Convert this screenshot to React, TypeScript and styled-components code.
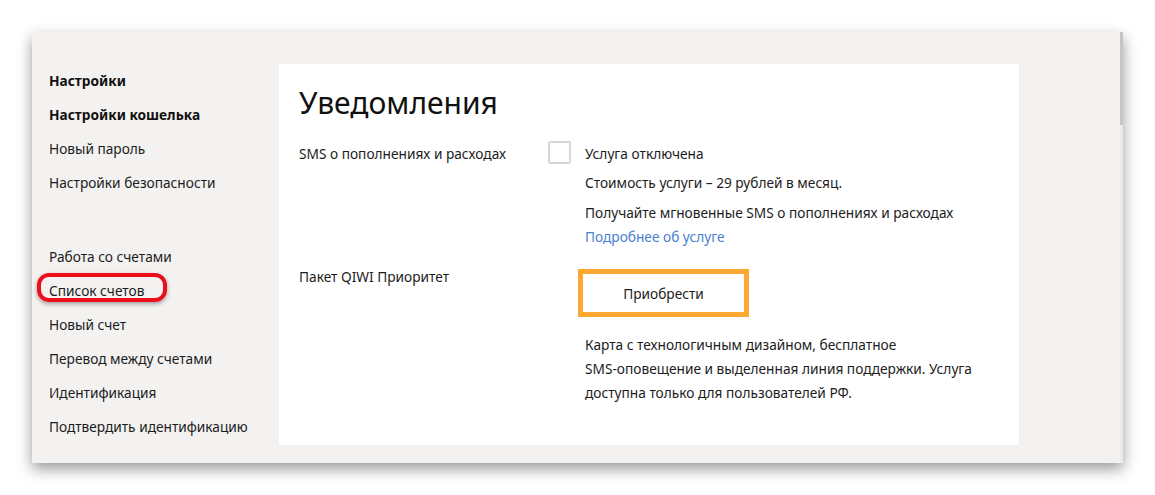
import React from 'react'
import styled, { createGlobalStyle } from 'styled-components'

const GlobalStyle = createGlobalStyle`
  html, body {
    margin: 0;
    padding: 0;
    background: #ffffff;
  }

  body {
    font-family: 'Noto Sans', 'Open Sans', Arial, sans-serif;
    color: #1c1c1c;
  }
`

const Page = styled.div`
  padding: 32px 0 0 32px;
  width: 1155px;
  height: 495px;
  box-sizing: border-box;
`

const Window = styled.div`
  display: flex;
  width: 1091px;
  height: 431px;
  background: #f3f2f0;
  box-shadow: 0 6px 14px rgba(0, 0, 0, 0.4);
`

const Sidebar = styled.nav`
  width: 247px;
  padding: 32px 0 0 17px;
  box-sizing: border-box;
  flex-shrink: 0;
`

const Group = styled.ul`
  list-style: none;
  margin: 0;
  padding: 0;

  & + & {
    margin-top: 40px;
  }
`

const Item = styled.li<{ $bold?: boolean; $marked?: boolean }>`
  position: relative;
  height: 34px;
  line-height: 34px;
  font-size: 13.7px;
  font-weight: ${(p) => (p.$bold ? 700 : 400)};
  color: ${(p) => (p.$bold ? '#111' : '#1c1c1c')};
  white-space: nowrap;

  ${(p) =>
    p.$marked &&
    `
    &::after {
      content: '';
      position: absolute;
      left: -12px;
      top: -1px;
      width: 130px;
      height: 29px;
      box-sizing: border-box;
      border: 4px solid #ec0f1a;
      border-radius: 12px;
      box-shadow: 0 2px 4px rgba(0, 0, 0, 0.35);
    }
  `}
`

const Main = styled.div`
  flex: 1;
  padding: 32px 0 18px;
  display: flex;
`

const Panel = styled.section`
  width: 740px;
  background: #ffffff;
  padding: 21px 0 40px 20px;
  box-sizing: border-box;
`

const Title = styled.h1`
  margin: 0 0 21px;
  font-size: 30px;
  line-height: 36px;
  font-weight: 400;
  color: #111;
`

const Row = styled.div`
  display: grid;
  grid-template-columns: 249px 1fr;

  & + & {
    margin-top: 16px;
  }
`

const Label = styled.div`
  font-size: 13.7px;
  line-height: 24px;
`

const Value = styled.div`
  display: flex;
  flex-direction: column;
`

const CheckLine = styled.div`
  display: flex;
  gap: 14px;
`

const Checkbox = styled.span`
  width: 23px;
  height: 23px;
  box-sizing: border-box;
  border: 2px solid #d7d7d7;
  border-radius: 2px;
  margin-top: -1px;
  flex-shrink: 0;
`

const Lines = styled.div`
  display: flex;
  flex-direction: column;
`

const Text = styled.p<{ $gap?: number }>`
  margin: ${(p) => p.$gap ?? 0}px 0 0;
  font-size: 13.7px;
  line-height: 24px;
`

const Link = styled.a`
  font-size: 13.7px;
  line-height: 24px;
  color: #4a7fd0;
  text-decoration: none;
`

const BuyButton = styled.button`
  width: 171px;
  height: 48px;
  margin: 4px 0 0 30px;
  border: 5px solid #ffa733;
  background: #ffffff;
  font-family: inherit;
  font-size: 13.7px;
  color: #1c1c1c;
  cursor: pointer;
`

const Description = styled.p`
  margin: 16px 0 0 37px;
  width: 400px;
  font-size: 13.7px;
  line-height: 24px;
`

const Aside = styled.div`
  flex: 1;
`

const Scrollbar = styled.div`
  width: 3px;
  background: #ebebeb;
  flex-shrink: 0;
`

const Thumb = styled.div`
  height: 93px;
  background: #c6c6c6;
`

const settings = [
  { title: 'Настройки', bold: true },
  { title: 'Настройки кошелька', bold: true },
  { title: 'Новый пароль' },
  { title: 'Настройки безопасности' }
]

const accounts = [
  { title: 'Работа со счетами' },
  { title: 'Список счетов', marked: true },
  { title: 'Новый счет' },
  { title: 'Перевод между счетами' },
  { title: 'Идентификация' },
  { title: 'Подтвердить идентификацию' }
]

function Menu({ items }: { items: { title: string; bold?: boolean; marked?: boolean }[] }) {
  return (
    <Group>
      {items.map((item) => (
        <Item key={item.title} $bold={item.bold} $marked={item.marked}>
          {item.title}
        </Item>
      ))}
    </Group>
  )
}

export default function App() {
  return (
    <Page>
      <GlobalStyle />
      <Window>
        <Sidebar>
          <Menu items={settings} />
          <Menu items={accounts} />
        </Sidebar>
        <Main>
          <Panel>
            <Title>Уведомления</Title>
            <Row>
              <Label>SMS о пополнениях и расходах</Label>
              <Value>
                <CheckLine>
                  <Checkbox />
                  <Lines>
                    <Text>Услуга отключена</Text>
                    <Text $gap={5}>Стоимость услуги – 29 рублей в месяц.</Text>
                    <Text $gap={6}>Получайте мгновенные SMS о пополнениях и расходах</Text>
                    <Link href="#">Подробнее об услуге</Link>
                  </Lines>
                </CheckLine>
              </Value>
            </Row>
            <Row>
              <Label>Пакет QIWI Приоритет</Label>
              <Value>
                <BuyButton>Приобрести</BuyButton>
                <Description>
                  Карта с технологичным дизайном, бесплатное
                  <br />
                  SMS-оповещение и выделенная линия поддержки. Услуга
                  <br />
                  доступна только для пользователей РФ.
                </Description>
              </Value>
            </Row>
          </Panel>
          <Aside />
        </Main>
        <Scrollbar>
          <Thumb />
        </Scrollbar>
      </Window>
    </Page>
  )
}
